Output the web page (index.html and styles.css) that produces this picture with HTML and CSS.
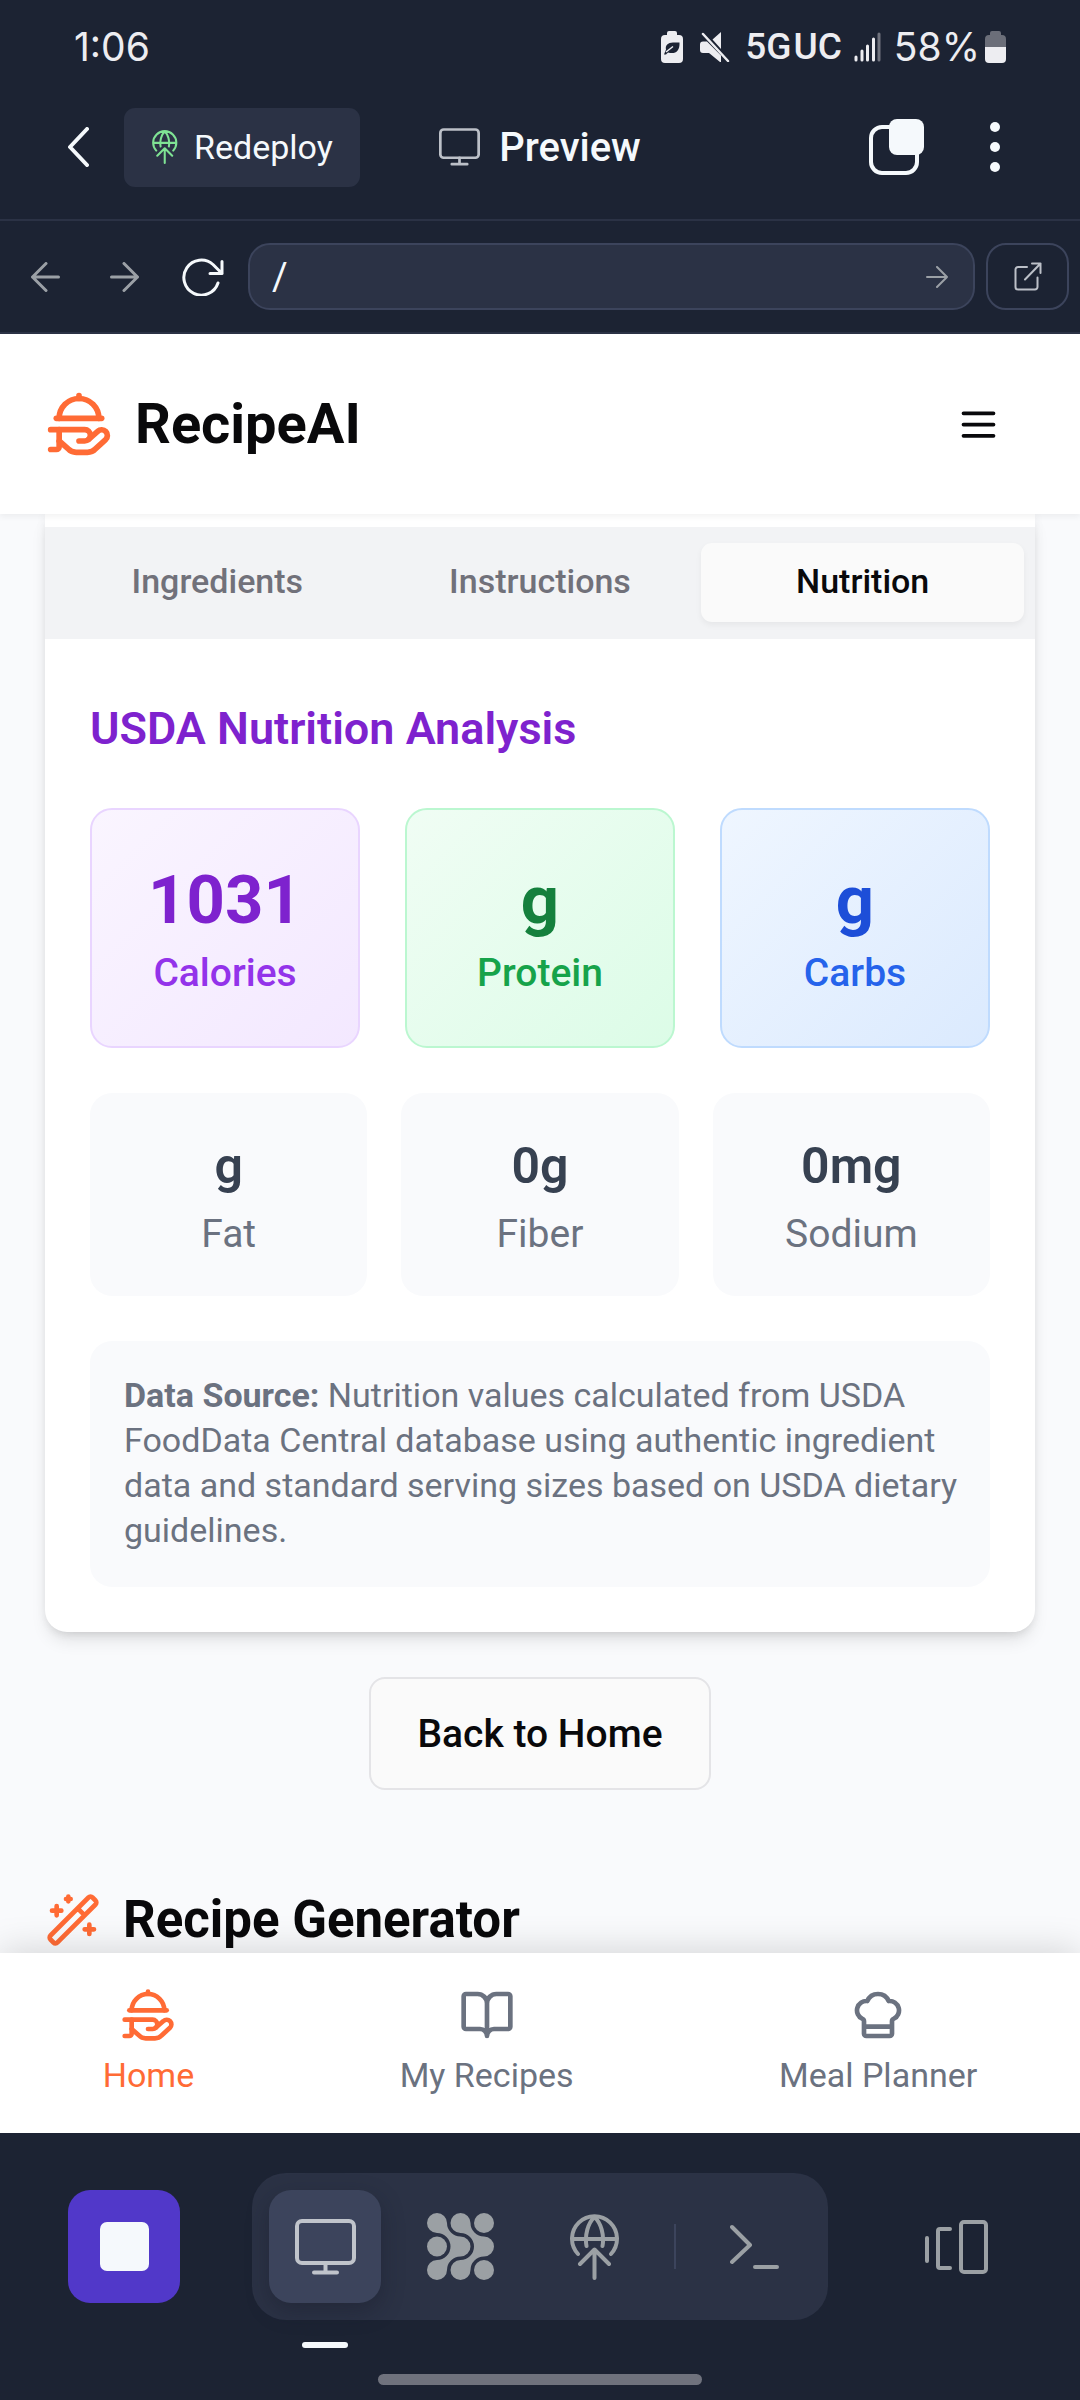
FILE: index.html
```html
<!DOCTYPE html>
<html lang="en">
<head>
<meta charset="utf-8">
<meta name="viewport" content="width=device-width, initial-scale=1">
<title>RecipeAI – Preview</title>
<link rel="stylesheet" href="styles.css">
</head>
<body>
<svg class="sprite" aria-hidden="true">
  <symbol id="globe-up" viewBox="0 0 50 66">
    <g fill="none" stroke="currentColor" stroke-width="4" stroke-linecap="round" stroke-linejoin="round">
      <path d="M8 40A22.500 22.500 0 1 1 41 40M2.500 25h44M16.500 32C14.500 21 18 9 24.500 3C31 9 34.500 21 32.500 32M24.500 36V64M10 50L24.500 35.500L39 50"/>
    </g>
  </symbol>
  <symbol id="monitor" viewBox="0 0 61 56">
    <g fill="none" stroke="currentColor" stroke-width="4" stroke-linecap="round">
      <rect x="2" y="2" width="57" height="42" rx="5"/>
      <path d="M30.500 44V53M19 53.500H42"/>
    </g>
  </symbol>
  <symbol id="platter" viewBox="0 0 24 24">
    <g fill="none" stroke="currentColor" stroke-width="2" stroke-linecap="round" stroke-linejoin="round">
      <path d="M12 3V2"/>
      <path d="m15.400 17.400 3.200-2.800a2 2 0 1 1 2.800 2.900l-3.600 3.300c-.7.8-1.700 1.200-2.800 1.200h-4c-1.100 0-2.100-.4-2.800-1.200L5 18"/>
      <path d="M2 14h12a2 2 0 0 1 0 4h-2"/>
      <path d="M4 10h16"/>
      <path d="M5 10a7 7 0 0 1 14 0"/>
      <path d="M5 14v6a1 1 0 0 1-1 1H2"/>
    </g>
  </symbol>
</svg>

<div class="status-bar">
  <time class="clock">1:06</time>
  <div class="status-icons">
    <svg class="power-save" width="22" height="32" viewBox="0 0 22 32"><path fill="#ededf1" d="M8 0h6a2 2 0 0 1 2 2v2h2a4 4 0 0 1 4 4v20a4 4 0 0 1-4 4H4a4 4 0 0 1-4-4V8a4 4 0 0 1 4-4h2V2a2 2 0 0 1 2-2z"/><path fill="#1c2333" d="M18.500 11.500H12c-5 0-8 3-7 7l-2 5h2l2-2c7 2 12-1 11.500-10z"/><path d="M5 21l7-5.500" stroke="#ededf1" stroke-width="1.500"/></svg>
    <svg class="mute" width="30" height="30" viewBox="0 0 30 30"><path fill="#ededf1" d="M0 12.500a3 3 0 0 1 3-3h4l14 14V30h-1L9 21H3a3 3 0 0 1-3-3zM21 0v17L12.500 7.500z"/><path d="M3 2L28 29" stroke="#ededf1" stroke-width="2.500" stroke-linecap="round"/></svg>
    <span class="network"><span>5G</span><span>UC</span></span>
    <svg class="signal" width="27" height="30" viewBox="0 0 27 30" fill="none" stroke="#ededf1" stroke-width="3" stroke-linecap="round"><path d="M2 25v3M8 19v9M13.500 14v14M19.500 7v21"/><path stroke="#70737e" d="M25 2v26"/></svg>
    <span class="percent">58%</span>
    <svg width="21" height="32" viewBox="0 0 21 32"><path fill="#6b6e79" d="M7 0h7a2 2 0 0 1 2 2v2h1a4 4 0 0 1 4 4v9H0V8a4 4 0 0 1 4-4h1V2a2 2 0 0 1 2-2z"/><path fill="#ededf1" d="M0 16h21v12a4 4 0 0 1-4 4H4a4 4 0 0 1-4-4z"/></svg>
  </div>
</div>

<header class="toolbar">
  <div class="toolbar-left">
    <button class="plain" aria-label="Back"><svg width="21" height="40" viewBox="0 0 21 40" fill="none" stroke="#f5f9fc" stroke-width="4" stroke-linecap="round" stroke-linejoin="round"><path d="M19 2L2 20L19 38"/></svg></button>
    <button class="redeploy"><svg width="26" height="34"><use href="#globe-up"/></svg>Redeploy</button>
  </div>
  <div class="toolbar-title"><svg width="41" height="38"><use href="#monitor"/></svg>Preview</div>
  <div class="toolbar-right">
    <button class="plain" aria-label="Tabs"><svg width="56" height="56" viewBox="0 0 56 56"><rect x="2" y="8" width="46" height="46" rx="11" fill="none" stroke="#f5f9fc" stroke-width="4"/><rect x="20" y="0" width="35" height="36" rx="8" fill="#f5f9fc"/></svg></button>
    <button class="plain" aria-label="More options"><svg width="10" height="50" viewBox="0 0 10 50" fill="#f5f9fc"><circle cx="5" cy="5" r="5"/><circle cx="5" cy="25" r="5"/><circle cx="5" cy="45" r="5"/></svg></button>
  </div>
</header>

<div class="address-bar">
  <div class="history">
    <button class="plain" aria-label="Go back"><svg width="29" height="30" viewBox="0 0 29 30"><path d="M27.500 15H1.500M15 1.500L1.500 15L15 28.500"/></svg></button>
    <button class="plain" aria-label="Go forward"><svg width="29" height="30" viewBox="0 0 29 30"><path d="M1.500 15H27.500M14 1.500L27.500 15L14 28.500"/></svg></button>
    <button class="plain reload" aria-label="Reload"><svg width="42" height="38" viewBox="0 0 42 38"><path d="M36 25A17.500 17.500 0 1 1 31 6.500L40 15.500M40 3.500V15.500H28"/></svg></button>
  </div>
  <form class="url">
    <input type="text" value="/" aria-label="Path">
    <button type="button" class="plain" aria-label="Go"><svg width="22" height="22" viewBox="0 0 22 22"><path d="M1 11H21M11 1L21 11L11 21"/></svg></button>
  </form>
  <button class="external" aria-label="Open in new window"><svg width="28" height="29" viewBox="0 0 28 29"><path d="M13 5H4a2.500 2.500 0 0 0-2.500 2.500V25A2.500 2.500 0 0 0 4 27.500H21a2.500 2.500 0 0 0 2.500-2.500V15.500M11 17.500L26.500 1.500M18 1.500H26.500V11"/></svg></button>
</div>

<div class="preview">
  <header class="app-header">
    <a class="brand" href="#"><svg width="68" height="68"><use href="#platter"/></svg>RecipeAI</a>
    <button class="plain" aria-label="Menu"><svg width="45" height="45" viewBox="0 0 24 24" fill="none" stroke="#09090b" stroke-width="2" stroke-linecap="round"><path d="M4 6h16M4 12h16M4 18h16"/></svg></button>
  </header>

  <main class="content">
    <section class="card">
      <div class="tabs" role="tablist">
        <button class="tab" role="tab">Ingredients</button>
        <button class="tab" role="tab">Instructions</button>
        <button class="tab active" role="tab" aria-selected="true">Nutrition</button>
      </div>
      <div class="panel" role="tabpanel">
        <h2>USDA Nutrition Analysis</h2>
        <div class="macros">
          <div class="macro purple"><strong>1031</strong><span>Calories</span></div>
          <div class="macro green"><strong>g</strong><span>Protein</span></div>
          <div class="macro blue"><strong>g</strong><span>Carbs</span></div>
        </div>
        <div class="details">
          <div class="detail"><strong>g</strong><span>Fat</span></div>
          <div class="detail"><strong>0g</strong><span>Fiber</span></div>
          <div class="detail"><strong>0mg</strong><span>Sodium</span></div>
        </div>
        <p class="source"><strong>Data Source:</strong> Nutrition values calculated from USDA FoodData Central database using authentic ingredient data and standard serving sizes based on USDA dietary guidelines.</p>
      </div>
    </section>
    <button class="back-home">Back to Home</button>
    <h2 class="generator"><svg width="56" height="56" viewBox="0 0 24 24" fill="none" stroke="#ff6b35" stroke-width="2" stroke-linecap="round" stroke-linejoin="round"><path d="m21.640 3.640-1.280-1.280a1.210 1.210 0 0 0-1.720 0L2.360 18.640a1.210 1.210 0 0 0 0 1.720l1.280 1.280a1.200 1.200 0 0 0 1.720 0L21.640 5.360a1.200 1.200 0 0 0 0-1.720M14 7l3 3M5 6v4M19 14v4M10 2v2M7 8H3M21 16h-4M11 3H9"/></svg>Recipe Generator</h2>
  </main>

  <nav class="bottom-nav">
    <a class="current" href="#"><svg width="56" height="56"><use href="#platter"/></svg>Home</a>
    <a href="#"><svg width="56" height="56" viewBox="0 0 24 24" fill="none" stroke="currentColor" stroke-width="2" stroke-linecap="round" stroke-linejoin="round"><path d="M12 7v14M3 18a1 1 0 0 1-1-1V4a1 1 0 0 1 1-1h5a4 4 0 0 1 4 4 4 4 0 0 1 4-4h5a1 1 0 0 1 1 1v13a1 1 0 0 1-1 1h-6a3 3 0 0 0-3 3 3 3 0 0 0-3-3z"/></svg>My Recipes</a>
    <a href="#"><svg width="56" height="56" viewBox="0 0 24 24" fill="none" stroke="currentColor" stroke-width="2" stroke-linecap="round" stroke-linejoin="round"><path d="M17 21a1 1 0 0 0 1-1v-5.350c0-.457.316-.844.727-1.041a4 4 0 0 0-2.134-7.589 5 5 0 0 0-9.186 0 4 4 0 0 0-2.134 7.588c.411.198.727.585.727 1.041V20a1 1 0 0 0 1 1ZM6 17h12"/></svg>Meal Planner</a>
  </nav>
</div>

<footer class="dock-bar">
  <button class="stop" aria-label="Stop"><span></span></button>
  <div class="dock">
    <button class="tool active" aria-label="Preview"><svg width="61" height="56"><use href="#monitor"/></svg></button>
    <button class="tool" aria-label="Agent"><svg width="67" height="67" viewBox="0 0 67 67" fill="currentColor"><path id="blob" d="M0 10A10 10 0 0 1 20 10A13.500 13.500 0 0 0 33.500 23.500A10 10 0 0 1 33.500 43.500A13.500 13.500 0 0 0 20 57A10 10 0 1 1 10 47A13.500 13.500 0 0 0 10 20A10 10 0 0 1 0 10Z"/><use href="#blob" x="23.500"/><circle cx="10" cy="33.500" r="10"/><circle cx="57" cy="10" r="10"/><circle cx="57" cy="57" r="10"/></svg></button>
    <button class="tool" aria-label="Deploy"><svg width="50" height="66"><use href="#globe-up"/></svg></button>
    <span class="divider"></span>
    <button class="tool" aria-label="Console"><svg width="50" height="46" viewBox="0 0 50 46" fill="none" stroke="currentColor" stroke-width="4" stroke-linecap="round" stroke-linejoin="round"><path d="M2 3L20 21L2 38M25 43H47"/></svg></button>
  </div>
  <button class="tool" aria-label="Switch layout"><svg width="64" height="56" viewBox="0 0 64 56" fill="none" stroke="currentColor" stroke-width="4" stroke-linecap="round" stroke-linejoin="round"><path d="M3 19V42M26 10H16a2 2 0 0 0-2 2V47a2 2 0 0 0 2 2H26"/><rect x="37" y="3" width="25" height="50" rx="3"/></svg></button>
  <span class="gesture"></span>
</footer>
</body>
</html>
```
FILE: styles.css
```css
* {
  box-sizing: border-box;
}

body {
  margin: 0;
  height: 100vh;
  display: flex;
  flex-direction: column;
  background: #1c2333;
  font-family: Roboto, "Liberation Sans", sans-serif;
  color: #09090b;
}

button,
input {
  font: inherit;
  color: inherit;
  border: 0;
  padding: 0;
  margin: 0;
  background: none;
}

h2,
p {
  margin: 0;
}

a {
  color: inherit;
  text-decoration: none;
}

svg {
  display: block;
  flex: none;
}

.sprite {
  position: absolute;
  width: 0;
  height: 0;
}

.plain {
  display: flex;
  align-items: center;
  justify-content: center;
}

/* Phone status bar */
.status-bar {
  flex: none;
  height: 75px;
  display: flex;
  align-items: center;
  justify-content: space-between;
  padding: 18px 74px 0;
  color: #ededf1;
  font: 400 39px/57px Inter, Roboto, sans-serif;
}

.status-icons {
  display: flex;
  align-items: center;
}

.power-save {
  margin-right: 17px;
}

.mute {
  margin-right: 15px;
}

.network {
  display: flex;
  gap: 2px;
  font: 500 37px/57px Roboto, sans-serif;
  margin-right: 12px;
}

.signal {
  margin-right: 13px;
}

.percent {
  margin-right: 5px;
}

/* Editor toolbar */
.toolbar {
  flex: none;
  height: 146px;
  display: grid;
  grid-template-columns: 1fr auto 1fr;
  align-items: center;
  padding: 0 68px;
  border-bottom: 2px solid #2b3245;
  color: #f5f9fc;
}

.toolbar-left {
  display: flex;
  align-items: center;
  gap: 35px;
}

.redeploy {
  display: flex;
  align-items: center;
  gap: 16px;
  height: 79px;
  padding: 0 27px 0 28px;
  border-radius: 11px;
  background: #2b3245;
  font-size: 34px;
}

.redeploy svg {
  color: #7fe394;
}

.toolbar-title {
  display: flex;
  align-items: center;
  gap: 19px;
  font-size: 40px;
  font-weight: 500;
}

.toolbar-title svg {
  color: #bcc0c8;
}

.toolbar-right {
  display: flex;
  align-items: center;
  justify-content: flex-end;
  gap: 65px;
  padding-right: 12px;
}

/* Address bar */
.address-bar {
  flex: none;
  height: 113px;
  display: flex;
  align-items: center;
  padding: 0 11px 0 17px;
  border-bottom: 2px solid #2b3245;
  color: #f5f9fc;
}

.address-bar svg {
  fill: none;
  stroke: #9ba0a6;
  stroke-width: 3;
  stroke-linecap: round;
  stroke-linejoin: round;
}

.history {
  display: flex;
  gap: 23px;
  margin-right: 17px;
}

.history .plain {
  width: 56px;
  height: 56px;
}

.address-bar .reload svg {
  stroke: #f5f9fc;
}

.url {
  flex: 1;
  height: 67px;
  display: flex;
  align-items: center;
  padding: 0 25px 0 22px;
  border: 2px solid #3c445c;
  border-radius: 22px;
  background: #2b3245;
}

.url input {
  flex: 1;
  min-width: 0;
  font-size: 38px;
}

.url svg,
.external svg {
  stroke-width: 2;
}

.external {
  width: 83px;
  height: 67px;
  margin-left: 11px;
  display: flex;
  align-items: center;
  justify-content: center;
  border: 2px solid #3c445c;
  border-radius: 20px;
}

.address-bar .external svg {
  stroke: #bcc0c8;
}

/* Previewed app */
.preview {
  flex: 1;
  min-height: 0;
  display: flex;
  flex-direction: column;
  background: #f9fafc;
  overflow: hidden;
}

.app-header {
  position: relative;
  z-index: 1;
  flex: none;
  height: 180px;
  display: flex;
  align-items: center;
  justify-content: space-between;
  padding: 0 79px 0 45px;
  background: #fff;
  box-shadow: 0 3px 6px rgba(0, 0, 0, 0.05);
}

.brand {
  display: flex;
  align-items: center;
  gap: 22px;
  font-size: 56px;
  font-weight: 700;
}

.brand svg {
  color: #ff6b35;
}

.content {
  flex: 1;
  min-height: 0;
  overflow: hidden;
  padding: 0 45px;
  display: flex;
  flex-direction: column;
  align-items: center;
}

.card {
  flex: none;
  width: 100%;
  padding-top: 13px;
  background: #fff;
  border-radius: 0 0 22px 22px;
  box-shadow: 0 11px 17px -3px rgba(0, 0, 0, 0.1), 0 6px 11px -6px rgba(0, 0, 0, 0.1), 0 0 11px rgba(0, 0, 0, 0.05);
}

.tabs {
  display: grid;
  grid-template-columns: repeat(3, 1fr);
  padding: 16px 11px 17px;
  background: #f2f3f5;
}

.tab {
  height: 79px;
  padding-bottom: 3px;
  border-radius: 11px;
  font-size: 34px;
  font-weight: 500;
  color: #71717a;
}

.tab.active {
  background: #fafafa;
  color: #09090b;
  box-shadow: 0 3px 6px rgba(0, 0, 0, 0.05);
}

.panel {
  padding: 45px;
}

.panel h2 {
  margin-bottom: 34px;
  font-size: 45px;
  line-height: 90px;
  font-weight: 600;
  color: #7e22ce;
}

.macros,
.details {
  display: grid;
  grid-template-columns: repeat(3, 1fr);
  gap: 45px;
  margin-bottom: 45px;
  text-align: center;
}

.details {
  gap: 34px;
}

.macro,
.detail {
  display: flex;
  flex-direction: column;
  border-radius: 22px;
  font-size: 39px;
  line-height: 56px;
}

.macro {
  padding: 45px 20px;
  border: 2px solid;
  font-weight: 500;
}

.macro strong {
  font-size: 67px;
  line-height: 90px;
  font-weight: 700;
}

.purple {
  color: #9333ea;
  border-color: #e9d5ff;
  background: linear-gradient(135deg, #faf5ff, #f3e8ff);
}

.purple strong {
  color: #7e22ce;
}

.green {
  color: #16a34a;
  border-color: #bbf7d0;
  background: linear-gradient(135deg, #f0fdf4, #dcfce7);
}

.green strong {
  color: #15803d;
}

.blue {
  color: #2563eb;
  border-color: #bfdbfe;
  background: linear-gradient(135deg, #eff6ff, #dbeafe);
}

.blue strong {
  color: #1d4ed8;
}

.detail {
  padding: 34px 20px;
  background: #f9fafc;
  color: #6b7280;
}

.detail strong {
  font-size: 50px;
  line-height: 79px;
  font-weight: 600;
  color: #374151;
}

.source {
  padding: 32px 22px 34px 34px;
  border-radius: 22px;
  background: #f9fafc;
  font-size: 34px;
  line-height: 45px;
  color: #6b7280;
}

.back-home {
  flex: none;
  height: 113px;
  margin-top: 45px;
  padding: 0 46px;
  border: 2px solid #e4e4e7;
  border-radius: 16px;
  background: #fafafa;
  font-size: 39px;
  font-weight: 500;
}

.generator {
  flex: none;
  align-self: stretch;
  display: flex;
  align-items: center;
  gap: 22px;
  margin-top: 90px;
  font-size: 51px;
  line-height: 79px;
  font-weight: 700;
}

.bottom-nav {
  position: relative;
  z-index: 1;
  flex: none;
  height: 180px;
  display: flex;
  align-items: center;
  justify-content: space-around;
  padding-bottom: 2px;
  background: #fff;
  box-shadow: 0 -3px 34px rgba(0, 0, 0, 0.15);
  color: #6b7280;
}

.bottom-nav a {
  display: flex;
  flex-direction: column;
  align-items: center;
  gap: 10px;
  font-size: 34px;
  line-height: 45px;
}

.bottom-nav .current {
  color: #ff6b35;
}

/* Bottom dock */
.dock-bar {
  position: relative;
  z-index: 2;
  flex: none;
  height: 267px;
  display: flex;
  align-items: flex-start;
  justify-content: space-between;
  padding: 40px 68px 0;
  background: #1c2333;
}

.stop,
.tool {
  width: 112px;
  height: 113px;
  display: flex;
  align-items: center;
  justify-content: center;
  border-radius: 22px;
  color: #9ba0a4;
}

.dock-bar > .stop,
.dock-bar > .tool {
  margin-top: 17px;
}

.stop {
  background: #5138c9;
}

.stop span {
  width: 49px;
  height: 49px;
  border-radius: 7px;
  background: #f5f9fc;
}

.dock {
  display: flex;
  align-items: center;
  gap: 23px;
  padding: 17px;
  border-radius: 34px;
  background: #2b3245;
}

.tool.active {
  position: relative;
  background: #3c445c;
  color: #c0c4cb;
  box-shadow: 0 8px 22px rgba(20, 24, 38, 0.35);
}

.tool.active::after {
  content: "";
  position: absolute;
  top: 152px;
  left: 33px;
  width: 46px;
  height: 6px;
  border-radius: 3px;
  background: #f5f9fc;
}

.divider {
  width: 2px;
  height: 45px;
  background: #3c445c;
}

.gesture {
  position: absolute;
  bottom: 15px;
  left: 35%;
  right: 35%;
  height: 11px;
  border-radius: 6px;
  background: #6f727d;
}
```
